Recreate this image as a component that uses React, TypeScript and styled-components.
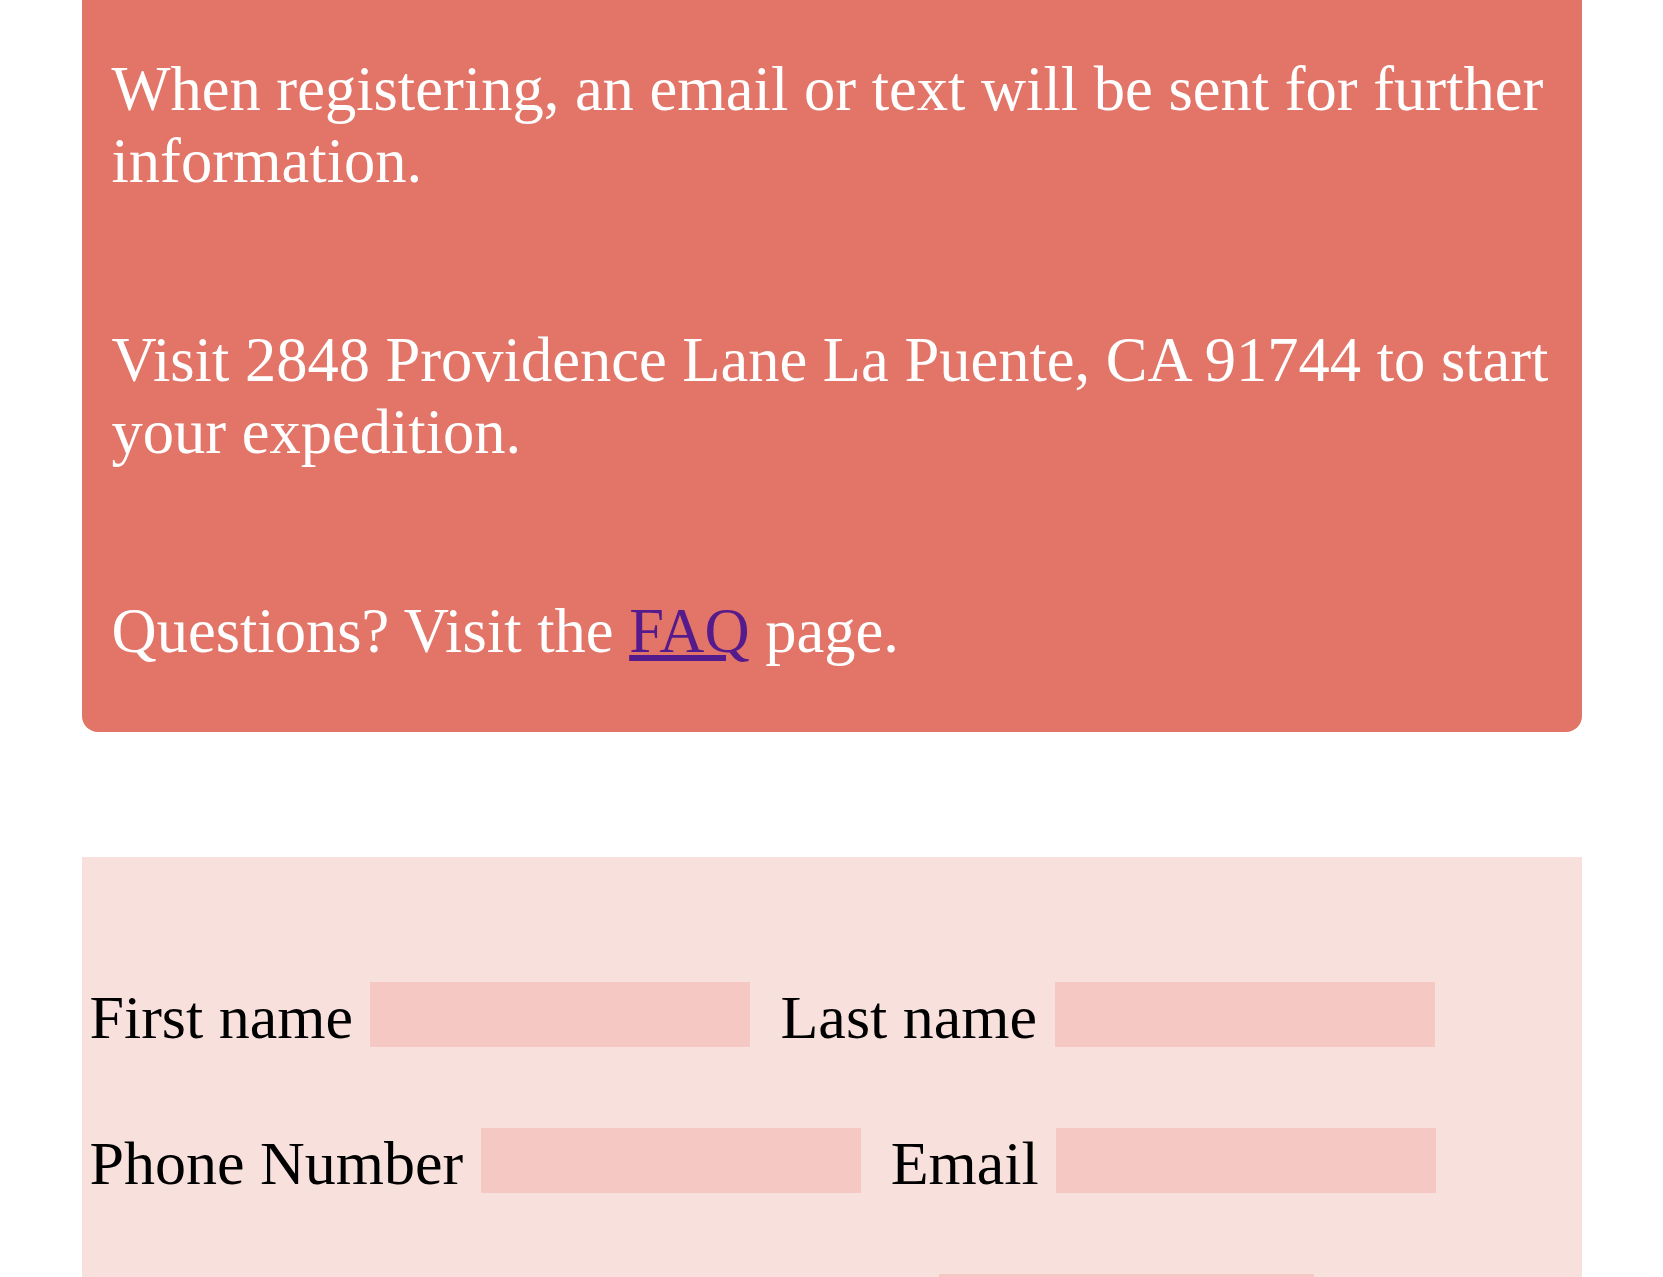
import React from "react";
import styled, { createGlobalStyle } from "styled-components";

const GlobalStyle = createGlobalStyle`
  html, body {
    margin: 0;
    padding: 0;
    background: #ffffff;
  }
  body {
    font-family: "Liberation Serif", "Times New Roman", serif;
  }
`;

const Page = styled.main`
  width: 1500px;
  margin: 0 auto;
  display: flex;
  flex-direction: column;
  gap: 125px;
  font-family: "Liberation Serif", "Times New Roman", serif;
  font-size: 62.5px;
  line-height: 71.5px;
`;

const InfoCard = styled.section`
  background: #e27567;
  color: #ffffff;
  border-radius: 0 0 16px 16px;
  padding: 54px 30px 64px 30px;
  display: flex;
  flex-direction: column;
  gap: 128px;
`;

const InfoText = styled.p`
  margin: 0;
`;

const FaqLink = styled.a`
  color: #551a8b;
  text-decoration: underline;
  text-decoration-thickness: 6px;
`;

const FormPanel = styled.form`
  background: #f8e0dd;
  padding: 125px 8px 80px 8px;
  display: flex;
  flex-direction: column;
  gap: 74.5px;
  font-size: 62px;
`;

const FormRow = styled.div`
  display: flex;
  align-items: flex-start;
  gap: 30px;
`;

const Field = styled.div`
  display: flex;
  align-items: flex-start;
  gap: 17.5px;
`;

const Label = styled.label`
  color: #000000;
  white-space: nowrap;
`;

const TextInput = styled.input<{ $w?: number }>`
  width: ${(p) => p.$w ?? 380}px;
  height: 65px;
  box-sizing: border-box;
  border: none;
  outline: none;
  background: #f5c8c3;
  padding: 0 8px;
  font-family: "Liberation Serif", "Times New Roman", serif;
  font-size: 32px;
`;

export default function App() {
  return (
    <>
      <GlobalStyle />
      <Page>
        <InfoCard>
          <InfoText>
            When registering, an email or text will be sent for further
            information.
          </InfoText>
          <InfoText>
            Visit 2848 Providence Lane La Puente, CA 91744 to start your
            expedition.
          </InfoText>
          <InfoText>
            Questions? Visit the <FaqLink href="#faq">FAQ</FaqLink> page.
          </InfoText>
        </InfoCard>
        <FormPanel onSubmit={(e) => e.preventDefault()}>
          <FormRow>
            <Field>
              <Label htmlFor="first">First name</Label>
              <TextInput id="first" type="text" />
            </Field>
            <Field>
              <Label htmlFor="last">Last name</Label>
              <TextInput id="last" type="text" />
            </Field>
          </FormRow>
          <FormRow>
            <Field>
              <Label htmlFor="phone">Phone Number</Label>
              <TextInput id="phone" type="tel" />
            </Field>
            <Field>
              <Label htmlFor="email">Email</Label>
              <TextInput id="email" type="email" />
            </Field>
          </FormRow>
          <FormRow>
            <Field>
              <Label htmlFor="count">Number of people in your group?</Label>
              <TextInput id="count" type="number" $w={375} />
            </Field>
          </FormRow>
        </FormPanel>
      </Page>
    </>
  );
}
